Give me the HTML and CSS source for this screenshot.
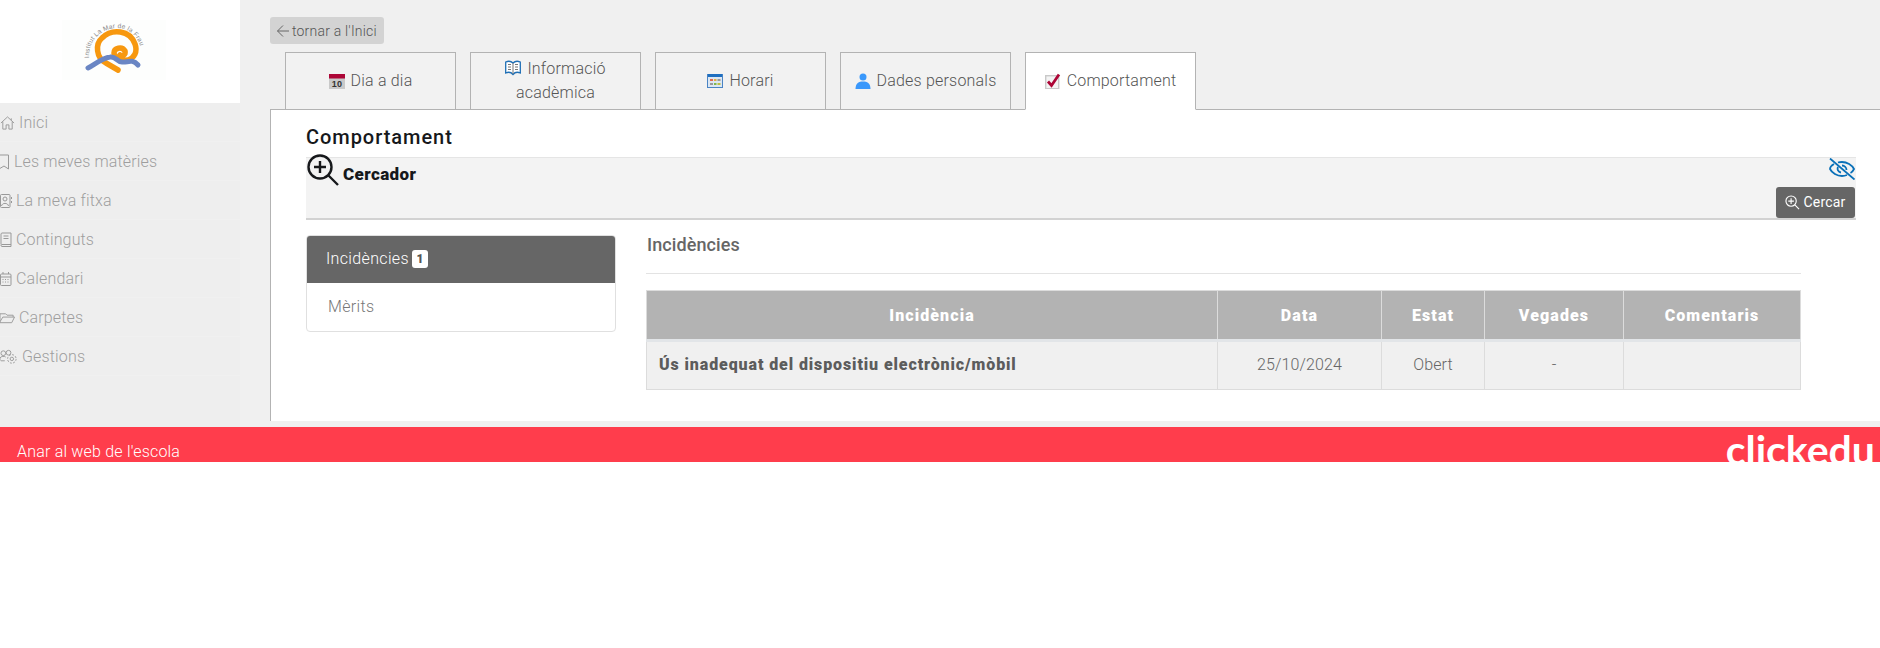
FILE: index.html
```html
<!DOCTYPE html>
<html lang="ca">
<head>
<meta charset="utf-8">
<title>Comportament</title>
<link rel="stylesheet" href="styles.css">
</head>
<body>
<div class="app">
  <div class="layout">
    <aside class="sidebar">
      <div class="brand">
        <svg class="logo" width="104" height="60" viewBox="0 0 104 60">
          <rect width="104" height="60" fill="#fdfefd"/>
          <path d="M56 50L44 43C34 38 33 24 40 18C50 8 68 10 73 24C76 32 72 38 66 40C58 42 52 38 52 33C52 28 60 26 63 31C64 35 60 37 58 35" fill="none" stroke="#f7980f" stroke-width="5.500" stroke-linecap="round"/>
          <path d="M26 48C32 45 40 38 48 37C54 36 55 42 60 42C65 43 70 38 76 45" fill="none" stroke="#6a86c4" stroke-width="5" stroke-linecap="round"/>
          <path id="logoArc" d="M27 38C26 18 42 8 56 8C70 8 80 22 81 38" fill="none"/>
          <text class="logo-text"><textPath href="#logoArc">Institut La Mar de la Frau</textPath></text>
        </svg>
      </div>
      <nav class="menu">
        <a class="menu-item">
          <svg class="mi mi-home" viewBox="0 0 16 16"><path d="M1 8 8 1.500 15 8M3 6.500V14.500H6.500V10H9.500V14.500H13V6.500M12 3V5"/></svg>
          <span>Inici</span>
        </a>
        <a class="menu-item">
          <svg class="mi mi-bookmark" viewBox="0 0 10 16"><path d="M-1 1H8.500V15L4 12 -1 15"/></svg>
          <span>Les meves matèries</span>
        </a>
        <a class="menu-item">
          <svg class="mi mi-card" viewBox="0 0 12 16"><rect x="0.500" y="1.500" width="9.500" height="13" rx="1"/><circle cx="5" cy="6" r="2"/><path d="M1.500 13C2 9.500 8 9.500 8.500 13M11.500 4V6M11.500 8V10"/></svg>
          <span>La meva fitxa</span>
        </a>
        <a class="menu-item">
          <svg class="mi mi-card" viewBox="0 0 12 16"><path d="M1 12.500V2C1 1.500 1.500 1 2 1H11V14.500H2C1.500 14.500 1 14 1 13.500C1 13 1.500 12.500 2 12.500H11M3.500 4H8.500M3.500 6.500H8.500"/></svg>
          <span>Continguts</span>
        </a>
        <a class="menu-item">
          <svg class="mi mi-card" viewBox="0 0 12 16"><rect x="0.500" y="3" width="10.500" height="11.500" rx="1"/><path d="M3 1V3M8.500 1V3M0.500 6H11M2.500 8.500H3.500M5 8.500H6M7.500 8.500H8.500M2.500 11H3.500M5 11H6M7.500 11H8.500"/></svg>
          <span>Calendari</span>
        </a>
        <a class="menu-item">
          <svg class="mi mi-home" viewBox="0 0 16 16"><path d="M0 5V3.500H6L7.500 5H14V7M0 5V13H12.500L15.500 7H3L0 12"/></svg>
          <span>Carpetes</span>
        </a>
        <a class="menu-item">
          <svg class="mi mi-gear" viewBox="0 0 19 16"><circle cx="3.500" cy="4" r="2.500"/><circle cx="9" cy="3.500" r="2.500"/><path d="M0 12V9C1 7 5 7 6 8M5 12H1"/><circle cx="12.500" cy="10" r="4.500" stroke-dasharray="2 1.500"/><circle cx="12.500" cy="10" r="1.800"/></svg>
          <span>Gestions</span>
        </a>
      </nav>
    </aside>
    <main class="main">
      <a class="back">
        <svg class="back-arrow" viewBox="0 0 14 14"><path d="M13 7H1.500M7 1.500 1.500 7 7 12.500"/></svg>
        <span>tornar a l'Inici</span>
      </a>
      <div class="tabs">
        <a class="tab">
          <svg class="tab-icon" viewBox="0 0 16 16"><rect y="1" width="16" height="15" fill="#c9c9c9"/><rect y="1" width="16" height="4.500" fill="#ad0637"/><text class="cal-num" x="8" y="14">10</text></svg>
          <span>Dia a dia</span>
        </a>
        <a class="tab">
          <span class="tab-wrap"><svg class="tab-icon tab-icon-inline" viewBox="0 0 16 16"><path d="M8 3C6 1 3 1 .7 2V13C3 12 6 12 8 14.500C10 12 13 12 15.300 13V2C13 1 10 1 8 3Z" fill="#fff" stroke="#1f6fb5" stroke-width="1.300"/><path d="M8 3V14M3 4.500H6M3 7H6M3 9.500H6M10 4.500H13M10 7H13M10 9.500H13" stroke="#777" fill="none"/></svg> Informació acadèmica</span>
        </a>
        <a class="tab">
          <svg class="tab-icon" viewBox="0 0 16 16"><rect x=".5" y="1.500" width="15" height="13" fill="#dce7f3" stroke="#4a84c4"/><rect x="1" y="1" width="14" height="3" fill="#1f6fc0"/><rect x="3" y="6" width="3" height="2" fill="#e06a50"/><rect x="7" y="6" width="2.500" height="2" fill="#e0b040"/><rect x="10.500" y="6" width="3" height="2" fill="#9a9a9a"/><rect x="3" y="10" width="3" height="2" fill="#9a9a9a"/><rect x="7" y="10" width="2.500" height="2" fill="#7fb850"/><rect x="10.500" y="10" width="3" height="2" fill="#c0c040"/></svg>
          <span>Horari</span>
        </a>
        <a class="tab">
          <svg class="tab-icon" viewBox="0 0 16 16"><circle cx="8" cy="4" r="3.500" fill="#3a98fb"/><path d="M0.500 16C0.500 10 4 8.500 8 8.500C12 8.500 15.500 10 15.500 16Z" fill="#3a98fb"/></svg>
          <span>Dades personals</span>
        </a>
        <a class="tab tab-active">
          <svg class="tab-icon" viewBox="0 0 16 16"><rect x=".7" y="2.700" width="13" height="13" fill="#f4f4f4" stroke="#c9c9c9" stroke-width="1.400"/><path d="M3 8.500 6.500 12.500 14 1.500" fill="none" stroke="#ad0637" stroke-width="2.800"/></svg>
          <span>Comportament</span>
        </a>
      </div>
      <section class="panel">
        <h1 class="title">Comportament</h1>
        <div class="search">
          <div class="search-head">
            <svg class="search-glass" viewBox="0 0 32 32"><circle cx="13" cy="13" r="11.500"/><path d="M13 7V19M7 13H19M21.500 21.500 31 31"/></svg>
            <strong class="search-label">Cercador</strong>
            <svg class="search-eye" viewBox="0 0 26 22"><path d="M5 6C1.500 8 1 10.500 1 11C3 15 8 18 13 18C15 18 16.500 17.600 18 17M9 4.500C10.500 4 12 4 13 4C18 4 23 7 25 11C24.500 12 23.500 14 21.500 15M9 9C8 11 9 14 12 14.500M13 7.500C15.500 7.500 17.500 9.500 17.500 12M1 0.500 25.500 21.500"/></svg>
          </div>
          <div class="search-foot">
            <a class="search-btn">
              <svg class="btn-glass" viewBox="0 0 16 16"><circle cx="6.500" cy="6.500" r="5.500"/><path d="M6.500 3.500V9.500M3.500 6.500H9.500M10.500 10.500 15 15"/></svg>
              <span>Cercar</span>
            </a>
          </div>
        </div>
        <div class="columns">
          <div class="side-list">
            <a class="side-item side-active"><span>Incidències</span> <span class="badge">1</span></a>
            <a class="side-item">Mèrits</a>
          </div>
          <div class="content">
            <h2 class="subtitle">Incidències</h2>
            <table class="grid">
              <thead>
                <tr>
                  <th class="col-a">Incidència</th>
                  <th class="col-b">Data</th>
                  <th class="col-c">Estat</th>
                  <th class="col-d">Vegades</th>
                  <th class="col-e">Comentaris</th>
                </tr>
              </thead>
              <tbody>
                <tr>
                  <td class="name">Ús inadequat del dispositiu electrònic/mòbil</td>
                  <td>25/10/2024</td>
                  <td>Obert</td>
                  <td>-</td>
                  <td></td>
                </tr>
              </tbody>
            </table>
          </div>
        </div>
      </section>
    </main>
  </div>
  <footer class="footer">
    <a class="footer-link">Anar al web de l'escola</a>
    <span class="brand-mark">clickedu</span>
  </footer>
</div>
</body>
</html>
```
FILE: styles.css
```css
* { box-sizing: border-box; }
html, body { margin: 0; padding: 0; background: #fff; }
body { font-family: Roboto, "Liberation Sans", sans-serif; font-size: 16px; color: #666; }
a { text-decoration: none; color: inherit; }
h1, h2 { margin: 0; }

.app { height: 462px; overflow: hidden; background: #f0f0f0; display: flex; flex-direction: column; }
.layout { display: flex; height: 427px; flex: none; }

.sidebar { width: 240px; flex: none; background: #eee; }
.brand { height: 103px; background: #fff; padding: 20px 0 0 62px; }
.logo { display: block; }
.logo-text { font-family: "Liberation Sans", sans-serif; font-size: 6.5px; fill: #888; letter-spacing: .2px; }

.menu { display: flex; flex-direction: column; }
.menu-item { height: 39px; display: flex; align-items: center; border-bottom: 1px solid #f0f0f0; color: #9e9e9e; font-weight: 300; letter-spacing: .15px; overflow: hidden; }
.mi { flex: none; height: 16px; fill: none; stroke: #999; stroke-width: 1; margin-top: 1px; }
.mi-home { width: 15px; margin-right: 4px; }
.mi-bookmark { width: 10px; margin-right: 4px; }
.mi-card { width: 12px; margin-right: 4px; }
.mi-gear { width: 18px; margin-right: 4px; }

.main { flex: 1; min-width: 0; padding: 17px 0 0 30px; }
.back { display: inline-flex; align-items: center; height: 27px; width: 114px; padding-left: 6px; background: #d3d3d3; border-radius: 3px; font-size: 14px; font-weight: 300; color: #555; letter-spacing: .2px; vertical-align: top; }
.back-arrow { width: 14px; height: 14px; margin-right: 2px; fill: none; stroke: #666; stroke-width: 1; }

.tabs { display: flex; gap: 14px; padding-left: 15px; margin-top: 8px; position: relative; z-index: 1; }
.tab { width: 171px; height: 58px; margin-bottom: -1px; padding: 0 12px 1px; display: flex; align-items: center; justify-content: center; gap: 6px; text-align: center; line-height: 24px; background: #f2f2f2; border: 1px solid #b3b3b3; font-weight: 300; letter-spacing: .2px; color: #555; }
.tab-wrap { padding: 0 12px; }
.tab-active { background: #fff; border-bottom-color: #fff; }
.tab-icon { width: 16px; height: 16px; flex: none; }
.tab-icon-inline { vertical-align: -2px; margin-right: 2px; }
.cal-num { font-family: "Liberation Sans", sans-serif; font-size: 9px; font-weight: 700; fill: #333; text-anchor: middle; }

.panel { height: 312px; background: #fff; border-top: 1px solid #b3b3b3; border-left: 1px solid #b3b3b3; padding: 15px 24px 0 35px; }
.title { font-size: 20px; line-height: 24px; font-weight: 500; color: #16181b; letter-spacing: .95px; }
.search { height: 63px; margin-top: 8px; background: #f3f3f3; border-top: 1px solid #e5e5e5; border-bottom: 2px solid #d2d2d2; position: relative; }
.search-head { height: 29px; display: flex; align-items: flex-start; position: relative; }
.search-glass { position: absolute; left: 1px; top: -4px; width: 32px; height: 32px; fill: none; stroke: #16181b; stroke-width: 2.400; }
.search-label { margin: 6px 0 0 37px; font-size: 17px; line-height: 20px; font-weight: 900; color: #16181b; letter-spacing: .4px; }
.search-eye { position: absolute; right: 1px; top: 0; width: 26px; height: 22px; fill: none; stroke: #0a70b8; stroke-width: 1.800; }
.search-foot { display: flex; justify-content: flex-end; padding-right: 1px; }
.search-btn { display: flex; align-items: center; gap: 3px; width: 79px; height: 31px; padding-bottom: 1px; justify-content: center; background: #666; color: #fff; border-radius: 3px; font-size: 14px; letter-spacing: .2px; }
.btn-glass { width: 15px; height: 15px; fill: none; stroke: #fff; stroke-width: 1.200; }

.columns { display: grid; grid-template-columns: 310px 1155px; column-gap: 30px; margin-top: 15px; }
.side-list { height: 97px; border: 1px solid #e0e0e0; border-radius: 4px; background: #fff; overflow: hidden; }
.side-item { display: flex; align-items: center; gap: 4px; height: 48px; padding-left: 21px; padding-bottom: 2px; font-weight: 300; letter-spacing: .35px; color: #777; }
.side-active { height: 48px; margin: -1px -1px 0; padding-left: 20px; background: #666; color: #fff; gap: 3px; }
.badge { display: inline-flex; align-items: center; justify-content: center; width: 16px; height: 18px; margin-top: 2px; background: #fff; color: #555; border-radius: 3px; font-size: 12px; font-weight: 900; letter-spacing: 0; }

.subtitle { height: 39px; margin-bottom: 16px; border-bottom: 1px solid #e3e3e3; padding-left: 1px; font-size: 18px; line-height: 20px; font-weight: 500; color: #666; letter-spacing: .1px; }
.grid { width: 100%; border-collapse: collapse; table-layout: fixed; }
.grid th { height: 50px; padding: 0; background: #b3b3b3; border: 1px solid #dcdcdc; border-bottom: 3px solid #e2e5e8; color: #fff; font-size: 16px; font-weight: 900; letter-spacing: 1.1px; }
.grid td { height: 49px; padding: 0 0 2px; background: #f0f0f0; border: 1px solid #dcdcdc; text-align: center; font-weight: 300; letter-spacing: .15px; color: #666; }
.grid .name { text-align: left; padding-left: 12px; font-weight: 900; letter-spacing: .9px; color: #5c5c5c; }
.col-a { width: 571px; }
.col-b { width: 164px; }
.col-c { width: 103px; }
.col-d { width: 139px; }

.footer { height: 35px; flex: none; background: #ff3d4c; display: flex; justify-content: space-between; overflow: hidden; padding: 15px 5px 0 17px; color: #fff; }
.footer-link { font-size: 16px; line-height: 19px; font-weight: 300; letter-spacing: .2px; }
.brand-mark { margin-top: -17px; font-family: Lato, sans-serif; font-size: 41px; line-height: 49px; font-weight: 700; }
```
